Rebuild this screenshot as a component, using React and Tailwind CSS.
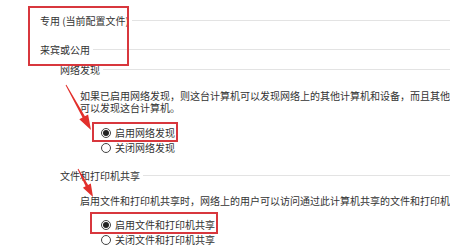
import React from 'react';

const Radio = ({ checked, label }) => (
  <div className="flex items-center h-[15px] pl-[101px]">
    <span className="w-[10px] h-[10px] rounded-full border border-[#444] bg-white flex items-center justify-center shrink-0">
      {checked && <span className="w-[6px] h-[6px] rounded-full bg-[#222]" />}
    </span>
    <span className="ml-[4px] whitespace-nowrap">{label}</span>
  </div>
);

const Heading = ({ label, className }) => (
  <div className={`flex items-center ${className}`}>
    <span className="whitespace-nowrap">{label}</span>
    <span className="flex-1 h-px bg-[#e3e3e3] ml-[3px]" />
  </div>
);

const arrow = (x1, y1, x2, y2, head, half) => {
  const dx = x2 - x1, dy = y2 - y1;
  const len = Math.hypot(dx, dy);
  const ux = dx / len, uy = dy / len;
  const px = -uy, py = ux;
  const bx = x2 - ux * head, by = y2 - uy * head;
  const pts = [
    [x1 - px * 0.5, y1 - py * 0.5],
    [bx - px * 1.4, by - py * 1.4],
    [bx - px * half, by - py * half],
    [x2, y2],
    [bx + px * half, by + py * half],
    [bx + px * 1.4, by + py * 1.4],
    [x1 + px * 0.5, y1 + py * 0.5],
  ];
  return pts.map(p => p.map(v => v.toFixed(1)).join(',')).join(' ');
};

export default function App() {
  return (
    <div
      className="relative w-[450px] h-[251px] overflow-hidden bg-white text-[10px] text-[#333]"
      style={{ fontFamily: '"Noto Sans CJK SC", "Microsoft YaHei", sans-serif' }}
    >
      <div className="pt-[10px]">
        <Heading label="专用 (当前配置文件)" className="h-[20px] pl-[40px]" />
        <Heading label="来宾或公用" className="h-[20px] pl-[40px] mt-[9px]" />
        <Heading label="网络发现" className="h-[21px] pl-[60px]" />

        <div className="mt-[10px] pl-[80px] leading-[12px] whitespace-nowrap">
          <div>如果已启用网络发现，则这台计算机可以发现网络上的其他计算机和设备，而且其他网络上的计算机</div>
          <div>可以发现这台计算机。</div>
        </div>

        <div className="mt-[11px]">
          <Radio checked label="启用网络发现" />
          <Radio label="关闭网络发现" />
        </div>

        <Heading label="文件和打印机共享" className="h-[20px] pl-[60px] mt-[10px]" />

        <div className="mt-[10px] pl-[80px] leading-[12px] whitespace-nowrap">
          启用文件和打印机共享时，网络上的用户可以访问通过此计算机共享的文件和打印机。
        </div>

        <div className="mt-[10px]">
          <Radio checked label="启用文件和打印机共享" />
          <Radio label="关闭文件和打印机共享" />
        </div>
      </div>

      {/* annotations */}
      <div className="absolute left-[28px] top-[6px] w-[101px] h-[60px] border-2 border-[#d8373d]" />
      <div className="absolute left-[92px] top-[122px] w-[86px] h-[20px] border-2 border-[#d8373d]" />
      <div className="absolute left-[90px] top-[212px] w-[128px] h-[22px] border-2 border-[#d8373d]" />
      <svg className="absolute inset-0 pointer-events-none" width="450" height="251">
        <polygon points={arrow(66, 85, 91, 130, 15, 5)} fill="#e2302c" />
        <polygon points={arrow(78, 169, 93, 197, 13, 4.5)} fill="#e2302c" />
      </svg>
    </div>
  );
}
